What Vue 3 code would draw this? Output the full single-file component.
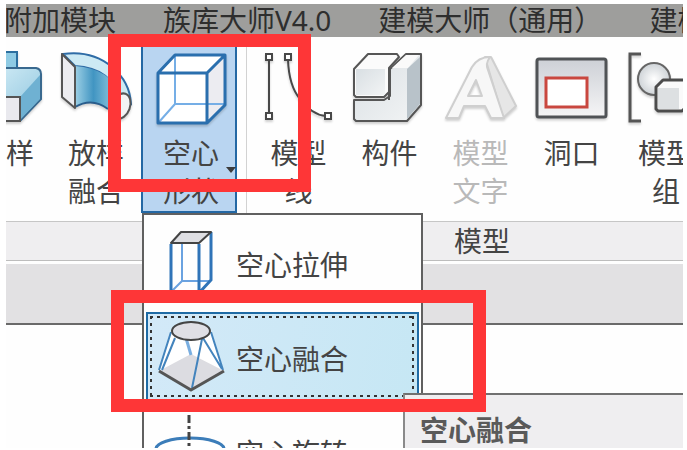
<template>
  <div class="app">
    <nav class="tabs">
      <a v-for="tab in tabs" :key="tab" href="#" class="tab" @click.prevent>{{ tab }}</a>
    </nav>

    <div class="ribbon">
      <section class="panel panel-shape">
        <div class="tools">
          <button class="tool">
            <svg class="icon" viewBox="-32 50 76 76">
              <defs>
                <linearGradient id="sweep" x1="0" y1="0" x2="1" y2="1">
                  <stop offset="0" stop-color="#d9f0f8" />
                  <stop offset="1" stop-color="#8cc4de" />
                </linearGradient>
              </defs>
              <path d="M-20 52H17V72H-20Z" fill="#8fcbe4" stroke="#2c6f9f" stroke-width="2" />
              <path d="M-10 68H36Q41 69 41 74V99L20 121H-20V97Z" fill="url(#sweep)" stroke="#39698f" stroke-width="2" />
              <path d="M20 97L40 75V99L20 120Z" fill="#6fb1d2" />
              <path d="M-20 97H20V121H-20Z" fill="#e9e9ee" stroke="#555" stroke-width="2" />
            </svg>
            <span class="label">放样</span>
          </button>
          <button class="tool">
            <svg class="icon" viewBox="58 50 76 76">
              <defs>
                <linearGradient id="bend" x1="0" y1="0" x2="1" y2="0">
                  <stop offset="0" stop-color="#9ed0e5" />
                  <stop offset="0.4" stop-color="#4195c2" />
                  <stop offset="1" stop-color="#a8d6e8" />
                </linearGradient>
              </defs>
              <path d="M63 54Q92 50 112 67Q130 82 131 104L120 100Q112 68 75 66Z" fill="#cdeaf4" stroke="#2f6ca6" stroke-width="2" />
              <path d="M75 66Q110 68 121 96L108 109Q92 97 75 107Z" fill="url(#bend)" />
              <path d="M75 107Q92 97 108 109" fill="none" stroke="#2a5d8c" stroke-width="2" />
              <ellipse cx="121" cy="106" rx="9" ry="13" transform="rotate(20 121 106)" fill="#f3f3f5" stroke="#555" stroke-width="2" />
              <path d="M62 54L75 67V108L62 97Z" fill="#ececf0" stroke="#555" stroke-width="2" stroke-linejoin="round" />
            </svg>
            <span class="label">放样<br />融合</span>
          </button>
          <button class="tool tool-active" :aria-expanded="open" @click="open = !open">
            <svg class="icon" viewBox="152 50 76 76">
              <path d="M157 73L174 55H224V105L206 123H157Z" fill="#fff" />
              <path d="M206 73L224 55V105L206 123Z" fill="#ececf1" />
              <path d="M174 56V104H223M174 104L158 122" fill="none" stroke="#75aee6" stroke-width="2" />
              <path d="M157 73L174 55H224V105L206 123H157ZM157 73H206V123M206 73L224 55" fill="none" stroke="#2a6fae" stroke-width="3" stroke-linejoin="round" />
            </svg>
            <span class="label">空心<br />形状</span>
            <span class="arrow"></span>
          </button>
        </div>
        <div class="panel-title"></div>
      </section>

      <section class="panel panel-model">
        <div class="tools">
          <button class="tool">
            <svg class="icon" viewBox="260 50 76 76" fill="none" stroke="#484848" stroke-width="2">
              <path d="M268 59V114" />
              <path d="M287 60Q288 86 299 99Q311 115 325 116" />
              <g fill="#fff">
                <path d="M265 54H271V60H265ZM265 113H271V119H265ZM284 54H290V60H284ZM324 113H330V119H324Z" />
              </g>
            </svg>
            <span class="label">模型<br />线</span>
          </button>
          <button class="tool">
            <svg class="icon" viewBox="351 50 76 76">
              <defs>
                <linearGradient id="block" x1="0" y1="0" x2="1" y2="1">
                  <stop offset="0" stop-color="#d9dfe3" />
                  <stop offset="1" stop-color="#f2f4f5" />
                </linearGradient>
              </defs>
              <g stroke="#565656" stroke-width="2" stroke-linejoin="round">
                <path d="M353 100H383L389 96V69L405 54H420V105L406 121H355L353 119Z" fill="url(#block)" />
                <path d="M353 69L367 54H396L398 57L388 68V92L383 97H355L353 95Z" fill="#fbfbfb" />
              </g>
              <path d="M355 69H384V95H355Z" fill="url(#block)" />
              <path d="M391 68L405 55H418L407 68Z" fill="#fafafa" />
              <path d="M406 69L419 57V104L406 119Z" fill="#b8c2c9" />
              <path d="M388 68V100" stroke="#565656" stroke-width="2" />
            </svg>
            <span class="label">构件</span>
          </button>
          <button class="tool" disabled>
            <svg class="icon" viewBox="442 50 76 76" stroke="#cfcfcf" stroke-width="2" stroke-linejoin="round">
              <path d="M470 69L484 57H490L515 106L502 118L486 64Z" fill="#e6e6e6" />
              <path d="M445 118L471 67Q477 57 489 57Q484 64 487 70L503 118H490L484 106H463L458 118ZM467 96H481L475 80Z" fill="#f7f7f7" fill-rule="evenodd" />
            </svg>
            <span class="label">模型<br />文字</span>
          </button>
          <button class="tool">
            <svg class="icon" viewBox="533 50 76 76">
              <defs>
                <linearGradient id="plate" x1="0" y1="0" x2="0" y2="1">
                  <stop offset="0" stop-color="#cdd0d6" />
                  <stop offset="1" stop-color="#f5f5f6" />
                </linearGradient>
              </defs>
              <rect x="536" y="59" width="69" height="58" rx="2" fill="url(#plate)" stroke="#505356" stroke-width="3" />
              <rect x="545" y="78" width="41" height="29" fill="#fff" stroke="#c9473f" stroke-width="3" />
            </svg>
            <span class="label">洞口</span>
          </button>
          <button class="tool tool-wide">
            <svg class="icon" viewBox="628 50 76 76">
              <defs>
                <radialGradient id="ball" cx="0.5" cy="0.5" r="0.6">
                  <stop offset="0" stop-color="#fff" />
                  <stop offset="1" stop-color="#c4cacf" />
                </radialGradient>
              </defs>
              <path d="M641 54H630V121H641M692 54H702V121H692" fill="none" stroke="#555" stroke-width="3" />
              <circle cx="654" cy="79" r="16" fill="url(#ball)" stroke="#666" stroke-width="2" />
              <path d="M656 87L663 80H690V103L682 111H658L656 109Z" fill="#fafafa" stroke="#4c4c4c" stroke-width="3" stroke-linejoin="round" />
              <path d="M658 88H679V109H658Z" fill="#dde0e2" />
            </svg>
            <span class="label">模型<br />组</span>
          </button>
        </div>
        <div class="panel-title">模型</div>
      </section>
    </div>

    <div class="options-bar"></div>

    <div v-if="open" class="menu" role="menu">
      <button
        v-for="item in items"
        :key="item.id"
        class="menu-item"
        :class="{ selected: item.id === selected }"
        role="menuitem"
        @click="selected = item.id"
      >
        <svg v-if="item.id === 'extrude'" class="menu-icon" viewBox="154 227 76 76">
          <path d="M182 232V281H210M182 281L171 292" fill="none" stroke="#6aa2e0" stroke-width="2" />
          <path d="M171 244V293H199V244M199 293L211 280V232" fill="none" stroke="#2f74b8" stroke-width="3" />
          <path d="M171 243L181 232H211L199 243Z" fill="#dedee2" stroke="#444" stroke-width="2" stroke-linejoin="round" />
        </svg>
        <svg v-else-if="item.id === 'blend'" class="menu-icon" viewBox="154 321 76 76">
          <path d="M171 330L160 371L191 389L224 371L211 330Z" fill="#fff" />
          <path d="M159 371L191 354L224 371L191 390Z" fill="#dcdce1" />
          <path d="M186 338L191 355" stroke="#79aee0" stroke-width="3" />
          <path d="M171 332L159 370M175 338L162 370M211 332L223 370M203 338L222 369M202 339L192 388" fill="none" stroke="#4384bd" stroke-width="2" />
          <path d="M159 371L191 390L224 371" fill="none" stroke="#555" stroke-width="3" stroke-linejoin="round" />
          <ellipse cx="191" cy="331" rx="19" ry="9" fill="#dfdfe5" stroke="#444" stroke-width="2" />
        </svg>
        <svg v-else class="menu-icon" viewBox="154 414 76 76">
          <ellipse cx="190" cy="448" rx="34" ry="11" fill="#fff" stroke="#3c7db9" stroke-width="3" />
          <path d="M189 414V480" stroke="#444" stroke-width="3" stroke-dasharray="8 3 3 3" />
        </svg>
        <span>{{ item.name }}</span>
      </button>
    </div>

    <div class="tooltip" role="tooltip">空心融合</div>

    <div class="mark mark-tool"></div>
    <div class="mark mark-item"></div>
  </div>
</template>

<script setup>
import { ref } from 'vue'

const tabs = ['附加模块', '族库大师V4.0', '建模大师（通用）', '建模大师']

const items = [
  { id: 'extrude', name: '空心拉伸' },
  { id: 'blend', name: '空心融合' },
  { id: 'revolve', name: '空心旋转' }
]

const open = ref(true)
const selected = ref('blend')
</script>

<style>
body {
  background: #fff;
}
</style>

<style scoped>
.app {
  position: relative;
  height: calc(100vh - 6px);
  margin: 4px 4px 2px 6px;
  overflow: hidden;
  background: #fefefe;
  color: #444;
  font-family: "Noto Sans", "Noto Sans CJK SC", sans-serif;
  font-size: 28px;
  line-height: 38px;
}

button {
  margin: 0;
  padding: 0;
  border: none;
  background: none;
  color: inherit;
  font: inherit;
}

.tabs {
  display: flex;
  gap: 47px;
  height: 33px;
  margin-left: -2px;
  background: #9e9e9c;
  line-height: 32px;
}

.tab {
  flex: none;
  color: #2e2e2e;
  text-decoration: none;
  white-space: nowrap;
}

.ribbon {
  display: flex;
  margin-left: -45px;
}

.panel {
  display: flex;
  flex-direction: column;
}

.panel-shape {
  flex: none;
}

.panel-shape .tools {
  padding-right: 9px;
  border-right: 1px solid #d2d2d2;
}

.panel-model {
  flex: 1 0 470px;
}

.panel-model .tools {
  padding-left: 6px;
}

.tools {
  display: flex;
  align-items: flex-start;
  height: 184px;
}

.tool {
  position: relative;
  display: flex;
  flex: none;
  flex-direction: column;
  align-items: center;
  gap: 8px;
  width: 91px;
  height: 176px;
  padding-top: 13px;
}

.panel-shape .tool {
  width: 90px;
}

.panel-model .tool-wide {
  width: 98px;
}

.panel-shape .tool-active {
  width: 96px;
  padding-left: 4px;
  background: #b9d5f1;
  box-shadow: inset 0 0 0 2px #2468a4;
}

.tool:disabled {
  color: #b9b9b9;
}

.icon {
  display: block;
  flex: none;
  width: 76px;
  height: 76px;
  filter: drop-shadow(0 2px 1px rgba(0, 0, 0, 0.18));
}

.arrow {
  position: absolute;
  right: 1px;
  bottom: 40px;
  border: 5px solid transparent;
  border-top: 6px solid #3c3c3c;
  border-bottom: none;
}

.panel-title {
  height: 38px;
  border-top: 1px solid #c6c6c6;
  border-bottom: 1px solid #bdbdbd;
  background: #efeef0;
  text-align: center;
}

.options-bar {
  height: 59px;
  margin-top: 3px;
  border-bottom: 2px solid #6a6a6a;
  background: #e2e1e3;
}

.menu {
  position: absolute;
  top: 209px;
  left: 136px;
  width: 281px;
  box-sizing: border-box;
  padding: 3px 2px;
  border: 2px solid #606060;
  background: #fefefe;
}

.menu-item {
  position: relative;
  display: flex;
  align-items: center;
  gap: 6px;
  width: 100%;
  height: 94px;
  padding-left: 8px;
}

.menu-icon {
  flex: none;
  width: 76px;
  height: 76px;
}

.selected {
  background: linear-gradient(100deg, #d3e9f8, #c6e7f4);
  box-shadow: inset 0 0 0 2px #1f6ba5;
}

/* focus rectangle */
.selected::after {
  content: "";
  position: absolute;
  inset: 4px 5px 9px 4px;
  background:
    repeating-linear-gradient(90deg, #333 0 3px, transparent 3px 7px) top / 100% 2px no-repeat,
    repeating-linear-gradient(90deg, #333 0 3px, transparent 3px 7px) bottom / 100% 2px no-repeat,
    repeating-linear-gradient(#333 0 3px, transparent 3px 7px) left / 2px 100% no-repeat,
    repeating-linear-gradient(#333 0 3px, transparent 3px 7px) right / 2px 100% no-repeat;
}

.tooltip {
  position: absolute;
  top: 389px;
  right: 0;
  bottom: 0;
  left: 397px;
  padding: 16px 15px;
  border-top: 2px solid #707070;
  border-left: 2px solid #8a8a8a;
  background: #efeef0;
  color: #5a5a5a;
  font-weight: bold;
}

.mark {
  position: absolute;
  box-sizing: border-box;
  border: 13px solid #fe3637;
  pointer-events: none;
}

.mark-tool {
  top: 30px;
  left: 102px;
  width: 203px;
  height: 158px;
}

.mark-item {
  top: 286px;
  left: 105px;
  width: 375px;
  height: 122px;
}
</style>
